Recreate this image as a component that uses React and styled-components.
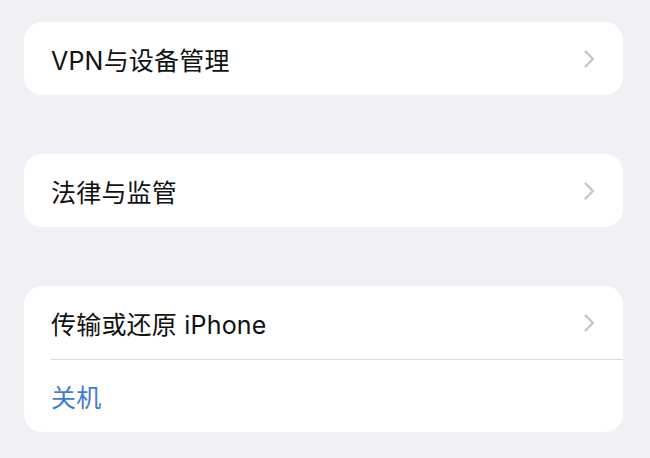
import React from "react";
import styled, { createGlobalStyle } from "styled-components";

const GlobalStyle = createGlobalStyle`
  html, body {
    margin: 0;
    padding: 0;
    background: #f0f0f5;
  }
`;

const Page = styled.div`
  width: 650px;
  height: 458px;
  box-sizing: border-box;
  padding: 22px 27px 0 24px;
  display: flex;
  flex-direction: column;
  gap: 59px;
  font-family: Inter, "Noto Sans CJK SC", sans-serif;
  overflow: hidden;
`;

const Group = styled.div`
  background: #ffffff;
  border-radius: 18px;
  overflow: hidden;
`;

const Row = styled.div`
  display: flex;
  padding-left: 27px;
`;

const Inner = styled.div`
  flex: 1;
  height: 73px;
  box-sizing: border-box;
  display: flex;
  align-items: center;
  justify-content: space-between;
  padding-right: 28px;
  ${Row} + ${Row} & {
    border-top: 1px solid #dcdce0;
  }
`;

const Label = styled.span`
  font-size: 25px;
  color: ${(p) => (p.$action ? "#3f7bd0" : "#111111")};
  letter-spacing: 0.2px;
`;

const Chevron = () => (
  <svg width="12" height="20" viewBox="0 0 12 20" fill="none">
    <path
      d="M2.5 2.5l7.5 7.5-7.5 7.5"
      stroke="#c4c4c8"
      strokeWidth="2.2"
      strokeLinecap="round"
      strokeLinejoin="round"
    />
  </svg>
);

const groups = [
  [{ label: "VPN与设备管理" }],
  [{ label: "法律与监管" }],
  [{ label: "传输或还原 iPhone" }, { label: "关机", action: true }],
];

export default function App() {
  return (
    <>
      <GlobalStyle />
      <Page>
        {groups.map((rows, i) => (
          <Group key={i}>
            {rows.map((r) => (
              <Row key={r.label}>
                <Inner>
                  <Label $action={r.action}>{r.label}</Label>
                  {!r.action && <Chevron />}
                </Inner>
              </Row>
            ))}
          </Group>
        ))}
      </Page>
    </>
  );
}
